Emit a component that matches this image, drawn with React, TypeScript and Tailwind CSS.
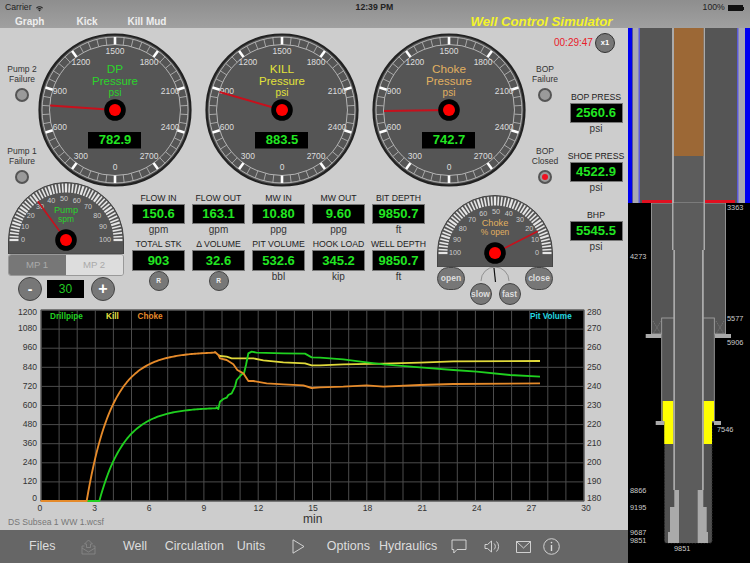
import React from "react";

const polar = (cx: number, cy: number, r: number, deg: number) => {
  const a = (deg * Math.PI) / 180;
  return [cx + r * Math.sin(a), cy - r * Math.cos(a)];
};

function Gauge({ title, color, value, reading }: { title: string; color: string; value: number; reading: string }) {
  const c = 77;
  const ticks = [];
  for (let i = 0; i < 50; i++) {
    const deg = i * 7.2;
    const [x1, y1] = polar(c, c, 65.5, deg);
    const [x2, y2] = polar(c, c, 73, deg);
    ticks.push(
      <line key={i} x1={x1} y1={y1} x2={x2} y2={y2} stroke={i % 5 === 0 ? "#fff" : "#bbb"} strokeWidth={i % 5 === 0 ? 2.6 : 0.8} />
    );
  }
  const labels = [0, 300, 600, 900, 1200, 1500, 1800, 2100, 2400, 2700];
  const needle = polar(c, c, 65, -180 + value * 0.12);
  return (
    <svg width="154" height="154" viewBox="0 0 154 154" className="shrink-0 overflow-visible">
      <circle cx={c} cy={c} r="75.5" fill="#555" stroke="#222" strokeWidth="2.2" />
      <circle cx={c} cy={c} r="73" fill="none" stroke="#ccc" strokeWidth="0.8" />
      <circle cx={c} cy={c} r="65.5" fill="none" stroke="#ccc" strokeWidth="0.8" />
      {ticks}
      {labels.map((l) => {
        const [x, y] = polar(c, c, 58, -180 + l * 0.12);
        return (
          <text key={l} x={x} y={y} fill="#ddd" fontSize="8.5" textAnchor="middle" dominantBaseline="middle">
            {l}
          </text>
        );
      })}
      <text x={c} y={37} fill={color} fontSize="11.8" textAnchor="middle" dominantBaseline="middle">{title}</text>
      <text x={c} y={48.5} fill={color} fontSize="11.5" textAnchor="middle" dominantBaseline="middle">Pressure</text>
      <text x={c} y={60.5} fill={color} fontSize="10" textAnchor="middle" dominantBaseline="middle">psi</text>
      <line x1={c} y1={c} x2={needle[0]} y2={needle[1]} stroke="#c8101c" strokeWidth="2" />
      <circle cx={c} cy={c} r="10.8" fill="#000" />
      <circle cx={c} cy={c} r="6" fill="#f00" />
      <rect x="50" y="99" width="53" height="16.5" fill="#000" />
      <text x={c} y={107.8} fill="#22e622" fontSize="13" fontWeight="bold" textAnchor="middle" dominantBaseline="middle">{reading}</text>
    </svg>
  );
}

function Dome({ labels, needleAt, lines, color, labelDx }: { labels: number[]; needleAt: number; lines: string[]; color: string; labelDx: number }) {
  const c = 58;
  const ticks = [];
  for (let i = 0; i <= 50; i++) {
    const deg = -90 + i * 3.6;
    const [x1, y1] = polar(c, c, 47.5, deg);
    const [x2, y2] = polar(c, c, 56.5, deg);
    ticks.push(<line key={i} x1={x1} y1={y1} x2={x2} y2={y2} stroke="#e6e6e6" strokeWidth={i % 5 === 0 ? 2.2 : 1.6} />);
  }
  const needle = polar(c, c, 48, needleAt);
  return (
    <svg width="116" height="72" viewBox="0 0 116 72" className="shrink-0 block">
      <path d="M0.5 58 A57.5 57.5 0 0 1 115.5 58 V72 H0.5 Z" fill="#555" stroke="#444" strokeWidth="1" />
      {ticks}
      {labels.map((l, i) => {
        const [x, y] = polar(c + labelDx, c, 41, -90 + i * 18);
        return (
          <text key={i} x={x} y={y} fill="#ccc" fontSize="7.2" textAnchor="middle" dominantBaseline="middle">
            {l}
          </text>
        );
      })}
      <text x={c} y={29} fill={color} fontSize="9.2" textAnchor="middle" dominantBaseline="middle">{lines[0]}</text>
      <text x={c} y={38} fill={color} fontSize="8.4" textAnchor="middle" dominantBaseline="middle">{lines[1]}</text>
      <line x1={c} y1={c} x2={needle[0]} y2={needle[1]} stroke="#c8101c" strokeWidth="1.6" />
      <circle cx={c} cy={c} r="10.8" fill="#000" />
      <circle cx={c} cy={c} r="6" fill="#f00" />
    </svg>
  );
}

function Lamp({ lit }: { lit?: boolean }) {
  return (
    <div className="flex h-[14px] w-[14px] items-center justify-center rounded-full border-2 border-[#555] bg-[#9a9a9a]">
      {lit && <div className="h-[6px] w-[6px] rounded-full bg-[#f01020]" />}
    </div>
  );
}

function LampLabel({ top, bottom, lit }: { top: string; bottom: string; lit?: boolean }) {
  return (
    <div className="flex h-[82px] shrink-0 flex-col items-center">
      <div className="whitespace-nowrap text-center text-[8.5px] leading-[10px] text-[#333]">
        {top}
        <br />
        {bottom}
      </div>
      <div className="mt-[4px]">
        <Lamp lit={lit} />
      </div>
    </div>
  );
}

function Readout({ label, value, unit, h = "h-[20px]" }: { label: string; value: string; unit?: string; h?: string }) {
  return (
    <div className="flex w-[53px] flex-col items-center">
      <div className="h-[12px] whitespace-nowrap text-[8.7px] leading-[12px] text-[#222]">{label}</div>
      <div className={`flex w-full items-center justify-center border border-[#777] bg-black text-[13px] font-bold text-[#22e622] ${h}`}>
        {value}
      </div>
      {unit && <div className="h-[11px] text-[10px] leading-[11px] text-[#333]">{unit}</div>}
    </div>
  );
}

function ResetButton() {
  return (
    <div className="flex h-[20px] w-[20px] items-center justify-center rounded-full border border-[#444] bg-[#777] text-[6.5px] font-bold text-[#eee]">
      R
    </div>
  );
}

function PillButton({ label, w, h }: { label: string; w: string; h: string }) {
  return (
    <div className={`flex items-center justify-center rounded-full border border-[#444] bg-[#777] text-[8.5px] font-bold text-[#ddd] ${w} ${h}`}>
      {label}
    </div>
  );
}

// rise to steady pressure, in the 3x coordinates the curve was read at
const rise = (from: number, to: number, a: number) => {
  const out: number[][] = [];
  for (let x = from; x <= to; x += 5) out.push([x, 588 - a * (1 - Math.exp(-(x - from) / 76))]);
  return out;
};

const choke = [[122,588],...rise(260,645,448),[645,141],[655,150],[660,160],[680,165],[700,178],[712,195],[730,205],[745,228],[760,228],[800,235],[850,238],[910,241],[935,249],[960,247],[1030,245],[1100,241],[1150,245],[1260,240],[1360,237],[1620,235]];
const drill = [[260,588],...rise(298,650,281),[650,307],[655,312],[660,290],[670,282],[680,278],[685,270],[695,265],[705,245],[710,225],[725,208],[732,205],[738,180],[745,145],[755,140],[770,143],[850,145],[915,146],[935,157],[960,158],[1030,163],[1100,172],[1150,178],[1260,187],[1360,195],[1430,200],[1530,210],[1620,215]];
const kill = [[655,150],[660,153],[680,155],[695,160],[730,160],[760,160],[790,166],[850,172],[915,175],[935,181],[960,181],[1030,178],[1150,176],[1260,173],[1360,169],[1620,168]];
const pts = (p: number[][]) => p.map((q) => q.join(",")).join(" ");

function Chart() {
  const vLines = Array.from({ length: 31 }, (_, i) => 41 + i * 18.1);
  const hLines = Array.from({ length: 11 }, (_, i) => 310 + i * 19.1);
  const left = ["1200", "1080", "960", "840", "720", "600", "480", "360", "240", "120", "0"];
  const right = ["280", "270", "260", "250", "240", "230", "220", "210", "200", "190", "180"];
  return (
    <svg width="628" height="210" viewBox="0 305 628 210" className="block shrink-0">
      <rect x="41" y="310" width="543" height="191" fill="#000" stroke="#777" />
      {vLines.map((x) => <line key={x} x1={x} y1="310" x2={x} y2="501" stroke="#4c4c4c" strokeWidth="1" />)}
      {hLines.map((y) => <line key={y} x1="41" y1={y} x2="584" y2={y} stroke="#4c4c4c" strokeWidth="1" />)}
      {left.map((l, i) => (
        <text key={l} x="37" y={i === 0 ? 313 : i === 10 ? 499 : 310 + i * 19.1} fill="#333" fontSize="8.6" textAnchor="end" dominantBaseline="middle">{l}</text>
      ))}
      {right.map((l, i) => (
        <text key={l} x="587" y={i === 0 ? 313 : i === 10 ? 499 : 310 + i * 19.1} fill="#333" fontSize="8.6" dominantBaseline="middle">{l}</text>
      ))}
      {[0, 3, 6, 9, 12, 15, 18, 21, 24, 27, 30].map((m, i) => (
        <text key={m} x={40 + i * 54.6} y="509" fill="#333" fontSize="8.6" textAnchor="middle" dominantBaseline="middle">{m}</text>
      ))}
      <text x="50" y="317" fill="#22d022" fontSize="8.2" fontWeight="bold" dominantBaseline="middle">Drillpipe</text>
      <text x="106" y="317" fill="#e6e040" fontSize="8.2" fontWeight="bold" dominantBaseline="middle">Kill</text>
      <text x="137.5" y="317" fill="#e58a2a" fontSize="8.2" fontWeight="bold" dominantBaseline="middle">Choke</text>
      <text x="530" y="317" fill="#22d8e0" fontSize="8.2" fontWeight="bold" dominantBaseline="middle">Pit Volume</text>
      <g transform="translate(0 305) scale(0.33333)" fill="none" strokeWidth="5.6" strokeLinejoin="round">
        <polyline points={pts(kill)} stroke="#e0d93a" />
        <polyline points={pts(drill)} stroke="#1fd01f" />
        <polyline points={pts(choke)} stroke="#e58a2a" />
      </g>
    </svg>
  );
}

function WellDiagram() {
  const labels: [string, number, number][] = [
    ["3363", 727, 208], ["4273", 630, 257], ["5577", 727, 319], ["5906", 727, 343], ["7546", 717, 430],
    ["8866", 630, 491], ["9195", 630, 508], ["9687", 630, 533], ["9851", 630, 541.5], ["9851", 674, 549],
  ];
  return (
    <svg width="122" height="535" viewBox="628 28 122 535" className="block shrink-0 bg-black">
      {/* riser */}
      <rect x="628" y="28" width="4.5" height="175" fill="#0000f0" />
      <rect x="745" y="28" width="5" height="175" fill="#0000f0" />
      <rect x="632.5" y="28" width="112.5" height="175" fill="#a9a9b2" />
      <rect x="638.5" y="28" width="100" height="175" fill="#5a5ad8" />
      <rect x="640" y="28" width="97" height="175" fill="#555" />
      <rect x="672" y="28" width="33" height="222" fill="#aaa" />
      <rect x="674" y="28" width="29.5" height="222" fill="#5c5c5c" />
      <rect x="674" y="28" width="29.5" height="128" fill="#9c6836" />
      {/* casing */}
      <rect x="651.5" y="203" width="74" height="131" fill="#555" stroke="#aaa" strokeWidth="0.8" />
      <rect x="672" y="203" width="33" height="47" fill="#aaa" />
      <rect x="673.5" y="203" width="30" height="47" fill="#5c5c5c" />
      <rect x="642" y="200" width="30" height="3" fill="#e01020" />
      <rect x="705" y="200" width="30" height="3" fill="#e01020" />
      <path d="M653 321 L661 334 M661 321 L653 334 M716 321 L724 334 M724 321 L716 334" stroke="#888" strokeWidth="0.6" strokeDasharray="1.5 1" />
      <rect x="645.7" y="334" width="15.5" height="4" fill="#aaa" />
      <rect x="715" y="334" width="16" height="4" fill="#aaa" />
      {/* liner */}
      <rect x="661.7" y="318" width="52.6" height="104" fill="#555" stroke="#aaa" strokeWidth="0.8" />
      {/* open hole */}
      <rect x="664.5" y="422" width="47.5" height="121" rx="2" fill="#505050" stroke="#333" strokeWidth="1" strokeDasharray="1.5 1.5" />
      {/* cement */}
      <rect x="662.7" y="401" width="10.8" height="20" fill="#ff0" />
      <rect x="703.3" y="401" width="10.7" height="20" fill="#ff0" />
      <rect x="664.3" y="421" width="9.2" height="23" fill="#ff0" />
      <rect x="703.3" y="421" width="8.7" height="23" fill="#ff0" />
      <rect x="655.7" y="421" width="8.5" height="4" fill="#aaa" />
      <rect x="714" y="421" width="7" height="4" fill="#aaa" />
      {/* drill string */}
      <rect x="673.3" y="250" width="30.5" height="240" fill="#aaa" />
      <rect x="675" y="250" width="27" height="293" fill="#5c5c5c" />
      <rect x="674.3" y="490" width="4.7" height="17" fill="#aaa" />
      <rect x="697.7" y="490" width="5.6" height="17" fill="#aaa" />
      <rect x="670" y="507" width="9" height="25" fill="#aaa" />
      <rect x="697.7" y="507" width="9" height="25" fill="#aaa" />
      <rect x="668" y="532" width="11" height="11" fill="#aaa" />
      <rect x="697.7" y="532" width="10.3" height="11" fill="#aaa" />
      {labels.map(([t, x, y], i) => (
        <text key={i} x={x} y={y} fill="#ccc" fontSize="7.4" dominantBaseline="middle">{t}</text>
      ))}
    </svg>
  );
}

const TOOL_STROKE = "#ddd";

export default function App() {
  return (
    <div className="relative flex h-[563px] w-[750px] flex-col overflow-hidden bg-[#cdcdcd] font-['Liberation_Sans',sans-serif]">
      {/* status + nav */}
      <div className="h-[28px] shrink-0 bg-gradient-to-b from-[#8e8e8e] to-[#a0a0a0]">
        <div className="flex h-[15px] items-center whitespace-nowrap px-[5px] pt-[1px] text-[8.7px] text-[#222]">
          <span>Carrier</span>
          <svg width="9" height="7" viewBox="0 0 18 14" className="ml-[3px]">
            <path d="M9 13 L6.5 10 A4 4 0 0 1 11.5 10 Z M4.5 8 A7 7 0 0 1 13.5 8 L12.3 9 A5.5 5.5 0 0 0 5.7 9 Z M2 5.5 A11 11 0 0 1 16 5.5 L14.8 6.8 A9 9 0 0 0 3.2 6.8 Z" fill="#222" />
          </svg>
          <span className="ml-[312px] w-[40px] font-bold">12:39 PM</span>
          <span className="ml-[307px]">100%</span>
          <div className="ml-[3px] h-[6px] w-[15px] bg-[#111]" />
          <div className="h-[3px] w-[1px] bg-[#111]" />
        </div>
        <div className="flex h-[13px] items-center whitespace-nowrap text-[10px] font-bold text-[#eee]">
          <span className="ml-[15px]">Graph</span>
          <span className="ml-[32px]">Kick</span>
          <span className="ml-[30px]">Kill Mud</span>
          <span className="ml-[304px] pt-[1px] text-[13.2px] italic text-[#f4f42a]">Well Control Simulator</span>
        </div>
      </div>

      <div className="flex min-h-0 flex-1">
        <div className="flex w-[628px] shrink-0 flex-col">
          {/* instruments */}
          <div className="flex h-[277px] shrink-0">
            <div className="w-[553px] shrink-0">
              <div className="flex h-[154px] pt-[5px]">
                <div className="flex h-[149px] w-[38px] shrink-0 flex-col items-center pl-[6px] pt-[31px]">
                  <LampLabel top="Pump 2" bottom="Failure" />
                  <LampLabel top="Pump 1" bottom="Failure" />
                </div>
                <div className="flex gap-[13px]">
                  <Gauge title="DP" color="#2bd42b" value={782.9} reading="782.9" />
                  <Gauge title="KILL" color="#e2e23a" value={883.5} reading="883.5" />
                  <Gauge title="Choke" color="#e0b060" value={742.7} reading="742.7" />
                </div>
                <div className="flex h-[149px] w-[38px] shrink-0 flex-col items-center pt-[31px]">
                  <LampLabel top="BOP" bottom="Failure" />
                  <LampLabel top="BOP" bottom="Closed" lit />
                </div>
              </div>

              <div className="flex">
                <div className="w-[132px] shrink-0 pl-[7.5px]">
                  <Dome labels={[0, 10, 20, 30, 40, 50, 60, 70, 80, 90, 100]} needleAt={-36} lines={["Pump", "spm"]} color="#2bd42b" labelDx={-2} />
                  <div className="flex h-[22px] w-[116px] overflow-hidden rounded-[3px] border border-[#999] text-[9.6px] text-[#aaa]">
                    <div className="flex flex-1 items-center justify-center bg-[#777]">MP 1</div>
                    <div className="flex flex-1 items-center justify-center bg-[#ddd]">MP 2</div>
                  </div>
                  <div className="ml-[10.5px] mt-[1px] flex items-center">
                    <div className="flex h-[24px] w-[24px] items-center justify-center rounded-full border border-[#444] bg-[#777] text-[14px] font-bold text-white">-</div>
                    <div className="ml-[5px] flex h-[18px] w-[37px] items-center justify-center bg-black text-[12px] text-[#22c822]">30</div>
                    <div className="ml-[7px] flex h-[24px] w-[24px] items-center justify-center rounded-full border border-[#444] bg-[#777] text-[16px] font-bold text-white">+</div>
                  </div>
                </div>

                <div className="mt-[10px] grid h-fit shrink-0 grid-cols-[repeat(5,53px)] gap-x-[7px] gap-y-[3px]">
                  <Readout label="FLOW IN" value="150.6" unit="gpm" />
                  <Readout label="FLOW OUT" value="163.1" unit="gpm" />
                  <Readout label="MW IN" value="10.80" unit="ppg" />
                  <Readout label="MW OUT" value="9.60" unit="ppg" />
                  <Readout label="BIT DEPTH" value="9850.7" unit="ft" />
                  <div className="flex flex-col items-center">
                    <Readout label="TOTAL STK" value="903" h="h-[21px]" />
                    <ResetButton />
                  </div>
                  <div className="flex flex-col items-center">
                    <Readout label="Δ VOLUME" value="32.6" h="h-[21px]" />
                    <ResetButton />
                  </div>
                  <Readout label="PIT VOLUME" value="532.6" unit="bbl" h="h-[21px]" />
                  <Readout label="HOOK LOAD" value="345.2" unit="kip" h="h-[21px]" />
                  <Readout label="WELL DEPTH" value="9850.7" unit="ft" h="h-[21px]" />
                </div>

                <div className="ml-[12px] mt-[13px] w-[116px] shrink-0">
                  <Dome labels={[100, 90, 80, 70, 60, 50, 40, 30, 20, 10, 0]} needleAt={63} lines={["Choke", "% open"]} color="#e0b060" labelDx={1} />
                  <div className="flex justify-between">
                    <PillButton label="open" w="w-[28px]" h="h-[23px]" />
                    <div className="flex w-[51px] flex-col items-center">
                      <svg width="30" height="16" viewBox="0 0 30 16">
                        <path d="M1 14 A14 14 0 0 1 29 14" fill="none" stroke="#777" strokeWidth="0.7" />
                        <line x1="14" y1="1" x2="15.5" y2="15" stroke="#111" strokeWidth="1.2" />
                      </svg>
                      <div className="flex w-full justify-between">
                        <PillButton label="slow" w="w-[22px]" h="h-[22px]" />
                        <PillButton label="fast" w="w-[22px]" h="h-[22px]" />
                      </div>
                    </div>
                    <PillButton label="close" w="w-[28px]" h="h-[23px]" />
                  </div>
                </div>
              </div>
            </div>

            <div className="flex w-[75px] shrink-0 flex-col">
              <div className="flex h-[28px] items-center pl-[1px] pt-[1px]">
                <span className="text-[10px] text-[#e8202a]">00:29:47</span>
                <div className="ml-[2px] flex h-[20px] w-[20px] items-center justify-center rounded-full border border-[#333] bg-[#777] text-[7.5px] font-bold text-white">x1</div>
              </div>
              <div className="ml-[16.5px] mt-[35px] flex flex-col">
                <Readout label="BOP PRESS" value="2560.6" unit="psi" />
                <div className="mt-[16px]">
                  <Readout label="SHOE PRESS" value="4522.9" unit="psi" />
                </div>
                <div className="mt-[16px]">
                  <Readout label="BHP" value="5545.5" unit="psi" />
                </div>
              </div>
            </div>
          </div>

          {/* chart */}
          <Chart />
          <div className="flex h-[15px] shrink-0 items-start">
            <span className="ml-[8px] mt-[2px] w-[295px] text-[8.6px] leading-[10px] text-[#777]">DS Subsea 1 WW 1.wcsf</span>
            <span className="text-[12px] leading-[9px] text-[#333]">min</span>
          </div>

          {/* toolbar */}
          <div className="flex h-[33px] shrink-0 items-center bg-[#666] text-[12.5px] text-[#ddd]">
            <span className="ml-[29px]">Files</span>
            <svg width="15" height="16" viewBox="0 0 15 16" className="ml-[25.6px]" fill="none" stroke="#8a8a8a" strokeWidth="0.8">
              <path d="M7.5 1 L11.5 5 H9.5 V8.5 H5.5 V5 H3.5 Z M3.5 7 H1 V15 H14 V7 H11.5 M1 9 L7.5 13 L14 9" />
            </svg>
            <span className="ml-[27px]">Well</span>
            <span className="ml-[17.7px]">Circulation</span>
            <span className="ml-[13px]">Units</span>
            <svg width="13" height="15" viewBox="0 0 13 15" className="ml-[26.5px]" fill="none" stroke={TOOL_STROKE} strokeWidth="0.9">
              <path d="M1 0.8 L12 7.5 L1 14.2 Z" />
            </svg>
            <span className="ml-[22px]">Options</span>
            <span className="ml-[9px]">Hydraulics</span>
            <svg width="16" height="15" viewBox="0 0 16 15" className="ml-[13.7px]" fill="none" stroke={TOOL_STROKE} strokeWidth="0.9">
              <path d="M1 1 H15 V10.5 H6 L2.8 14 V10.5 H1 Z" />
            </svg>
            <svg width="16" height="13" viewBox="0 0 16 13" className="ml-[17px]" fill="none" stroke={TOOL_STROKE} strokeWidth="0.9">
              <path d="M1 4.5 H3.5 L7.5 1 V12 L3.5 8.5 H1 Z M10 3.5 A4 4 0 0 1 10 9.5 M12.5 1.5 A7 7 0 0 1 12.5 11.5" />
            </svg>
            <svg width="15" height="12" viewBox="0 0 15 12" className="ml-[16px]" fill="none" stroke={TOOL_STROKE} strokeWidth="0.9">
              <path d="M0.5 0.5 H14.5 V11.5 H0.5 Z M0.5 0.5 L7.5 7 L14.5 0.5" />
            </svg>
            <svg width="17" height="17" viewBox="0 0 17 17" className="ml-[12px]" fill="none" stroke={TOOL_STROKE} strokeWidth="0.9">
              <circle cx="8.5" cy="8.5" r="7.8" />
              <path d="M8.5 7 V13" strokeWidth="1.4" />
              <circle cx="8.5" cy="4.6" r="0.8" fill={TOOL_STROKE} stroke="none" />
            </svg>
          </div>
        </div>

        <WellDiagram />
      </div>
    </div>
  );
}
